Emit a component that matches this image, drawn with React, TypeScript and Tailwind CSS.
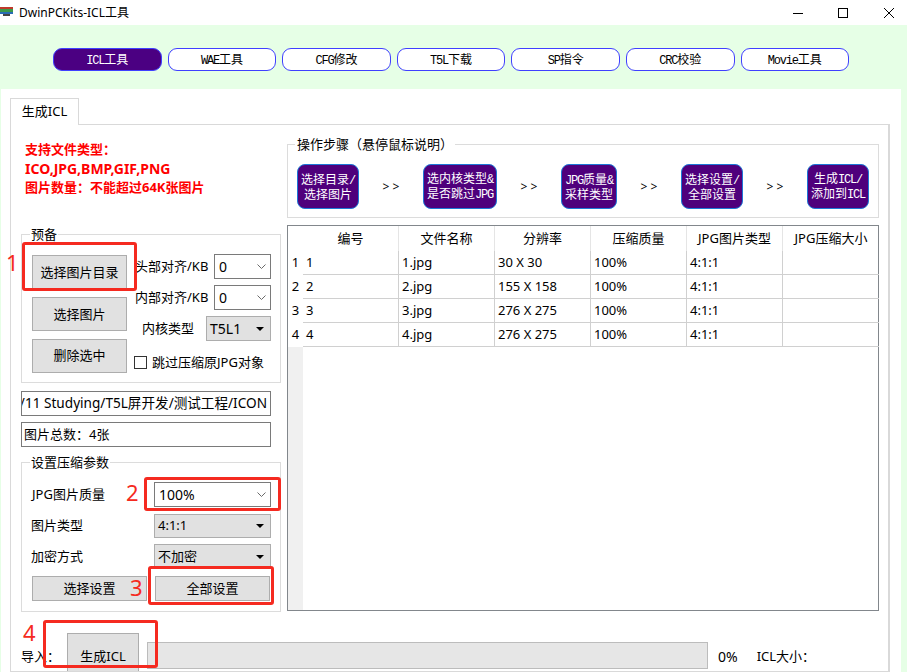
const NAV = ["ICL工具", "WAE工具", "CFG修改", "T5L下载", "SP指令", "CRC校验", "Movie工具"];
const ROWS = [
  ["1", "1.jpg", "30 X 30"],
  ["2", "2.jpg", "155 X 158"],
  ["3", "3.jpg", "276 X 275"],
  ["4", "4.jpg", "276 X 275"],
];
const HEADERS = ["编号", "文件名称", "分辨率", "压缩质量", "JPG图片类型", "JPG压缩大小"];

// latin runs are half width next to the CJK, like the bitmap font in the app
function MixedText({ text }: { text: string }) {
  return (
    <>
      {text.split(/([\x21-\x7e]+)/).map((part, i) =>
        i % 2 === 1 ? (
          <span key={i} className="font-['Liberation_Mono',monospace] tracking-[-1.2px]">{part}</span>
        ) : (
          <span key={i}>{part}</span>
        ),
      )}
    </>
  );
}

function Btn({ label, className }: { label: string; className: string }) {
  return (
    <button className={`flex items-center justify-center border border-[#adadad] bg-[#e1e1e1] text-[13px] text-black ${className}`}>
      {label}
    </button>
  );
}

function Chevron() {
  return (
    <svg width="9" height="5" viewBox="0 0 9 5" fill="none" className="shrink-0">
      <path d="M0.5 0.5 L4.5 4.5 L8.5 0.5" stroke="#6a6a6a" strokeWidth="1" />
    </svg>
  );
}

function Caret() {
  return (
    <svg width="8" height="4" viewBox="0 0 8 4" className="shrink-0">
      <path d="M0 0 H8 L4 4 Z" fill="#000" />
    </svg>
  );
}

function EditCombo({ value, className }: { value: string; className: string }) {
  return (
    <div className={`flex h-[25px] items-center justify-between border border-[#7a7a7a] bg-white pl-[4px] pr-[4px] text-[14px] ${className}`}>
      <span>{value}</span>
      <Chevron />
    </div>
  );
}

function GreyCombo({ value, className }: { value: string; className: string }) {
  return (
    <div className={`flex items-center justify-between border border-[#adadad] bg-[#e1e1e1] pl-[3px] pr-[6px] ${className}`}>
      <span>{value}</span>
      <Caret />
    </div>
  );
}

function Step({ lines, className }: { lines: string[]; className: string }) {
  return (
    <div className={`flex h-[45px] flex-col items-center justify-center rounded-[8px] border border-[#1d78d6] bg-[#4f007c] pt-[1px] text-[12px] leading-[14px] text-white ${className}`}>
      {lines.map((l) => (
        <div key={l} className="whitespace-nowrap">
          <MixedText text={l} />
        </div>
      ))}
    </div>
  );
}

function Arrows() {
  return <span className="mt-[14px] w-[17px] whitespace-pre text-center text-[12px] text-black">{"> >"}</span>;
}

function Mark({ n, className }: { n: string; className: string }) {
  return <span className={`absolute text-[22px] leading-none text-[#f52a20] ${className}`}>{n}</span>;
}

export default function App() {
  return (
    <div className="relative flex h-[672px] w-[907px] flex-col overflow-hidden bg-white font-['Noto_Sans','Noto_Sans_CJK_SC',sans-serif] text-[13px] text-black">
      {/* title bar */}
      <div className="flex h-[25px] shrink-0 items-center">
        <svg width="13" height="9" viewBox="0 0 13 9" className="mb-[2px] shrink-0">
          <rect x="0" y="0" width="13" height="2" fill="#c0392b" />
          <rect x="0" y="2" width="13" height="3" fill="#3c9a4a" />
          <rect x="0" y="5" width="13" height="2" fill="#2a6db5" />
          <rect x="3" y="7" width="7" height="2" fill="#444" />
        </svg>
        <span className="ml-[6px] text-[12px]">DwinPCKits-ICL工具</span>
        <div className="ml-auto flex items-center">
          <svg width="10" height="10" viewBox="0 0 10 10" className="mr-[35px]">
            <path d="M0 5.5 H10" stroke="#000" />
          </svg>
          <svg width="10" height="10" viewBox="0 0 10 10" className="mr-[36px]">
            <rect x="0.5" y="0.5" width="9" height="9" fill="none" stroke="#000" />
          </svg>
          <svg width="10" height="10" viewBox="0 0 10 10" className="mr-[13px]">
            <path d="M0 0 L10 10 M10 0 L0 10" stroke="#000" />
          </svg>
        </div>
      </div>

      <div className="flex min-h-0 flex-1 flex-col bg-[#e6ffe6]">
        {/* nav */}
        <div className="flex h-[64px] shrink-0 gap-[6px] pl-[53px] pt-[23px]">
          {NAV.map((n, i) => (
            <button
              key={n}
              className={`h-[23px] w-[108.6px] rounded-[9px] border border-[#4040ff] pt-[1px] text-[12px] ${i === 0 ? "bg-[#4b0082] text-white" : "bg-white text-black"}`}
            >
              <MixedText text={n} />
            </button>
          ))}
        </div>

        {/* panel */}
        <div className="ml-[1px] mr-[6px] flex min-h-0 flex-1 flex-col bg-white pl-[9px] pr-[11px] pt-[9px]">
          <div className="z-10 -mb-px flex h-[27px] w-[69px] shrink-0 items-center justify-center border border-b-0 border-[#d9d9d9] bg-white text-[13px]">
            生成ICL
          </div>
          <div className="flex min-h-0 flex-1 overflow-hidden border border-r-2 border-[#d9d9d9] pl-[10px]">
            {/* left column */}
            <div className="w-[260px] shrink-0">
              <div className="ml-[4px] mt-[15px] text-[13px] font-bold leading-[19px] text-[#ff0000]">
                <p>支持文件类型：</p>
                <p className="text-[14px]">ICO,JPG,BMP,GIF,PNG</p>
                <p>图片数量：不能超过64K张图片</p>
              </div>

              <div className="relative mt-[37px] h-[149px] border border-[#dcdcdc]">
                <span className="absolute -top-[9px] left-[8px] bg-white px-[1px] leading-[16px]">预备</span>
                <div className="flex pl-[10px] pt-[20px]">
                  <div className="flex w-[95px] flex-col gap-[8px]">
                    <Btn label="选择图片目录" className="h-[34px] pt-[2px]" />
                    <Btn label="选择图片" className="h-[34px] pt-[2px]" />
                    <Btn label="删除选中" className="h-[34px]" />
                  </div>
                  <div className="-mt-px ml-[7px] flex w-[137px] flex-col gap-[6px]">
                    <div className="flex items-center justify-between">
                      <span className="ml-px whitespace-nowrap">头部对齐/KB</span>
                      <EditCombo value="0" className="w-[57px]" />
                    </div>
                    <div className="flex items-center justify-between">
                      <span className="ml-px whitespace-nowrap">内部对齐/KB</span>
                      <EditCombo value="0" className="w-[57px]" />
                    </div>
                    <div className="flex items-center justify-between">
                      <span className="ml-[8px]">内核类型</span>
                      <GreyCombo value="T5L1" className="h-[25px] w-[65px] text-[14px]" />
                    </div>
                    <div className="mt-[6px] flex items-center whitespace-nowrap">
                      <span className="h-[13px] w-[13px] shrink-0 border border-[#333] bg-white" />
                      <span className="ml-[5px]">跳过压缩原JPG对象</span>
                    </div>
                  </div>
                </div>
              </div>

              <div className="mt-[8px] flex h-[25px] w-[250px] items-center justify-end overflow-hidden whitespace-nowrap border border-[#7a7a7a] pr-[3px] text-[13.6px]">
                /11 Studying/T5L屏开发/测试工程/ICON
              </div>
              <div className="mt-[6px] flex h-[25px] w-[250px] items-center border border-[#7a7a7a] pl-[2px]">
                图片总数：4张
              </div>

              <div className="relative mt-[15px] h-[150px] border border-[#dcdcdc] pl-[9px] pr-[9px] pt-[19px]">
                <span className="absolute -top-[9px] left-[8px] bg-white px-[1px] leading-[16px]">设置压缩参数</span>
                <div className="flex items-center justify-between">
                  <span className="ml-px">JPG图片质量</span>
                  <EditCombo value="100%" className="w-[117px]" />
                </div>
                <div className="mt-[7px] flex items-center justify-between">
                  <span>图片类型</span>
                  <GreyCombo value="4:1:1" className="h-[24px] w-[117px] text-[13px]" />
                </div>
                <div className="mt-[6px] flex items-center justify-between">
                  <span>加密方式</span>
                  <GreyCombo value="不加密" className="h-[25px] w-[117px] text-[13px]" />
                </div>
                <div className="ml-[1px] mt-[7px] flex gap-[8px]">
                  <Btn label="选择设置" className="h-[25px] w-[115px]" />
                  <Btn label="全部设置" className="h-[25px] w-[115px]" />
                </div>
              </div>

              <div className="mt-[21px] flex w-[800px] items-start">
                <span className="mt-[14px] w-[46px]">导入：</span>
                <Btn label="生成ICL" className="h-[48px] w-[72px] shrink-0" />
                <div className="ml-[8px] mt-[9px] h-[27px] w-[561px] shrink-0 border border-[#bcbcbc] bg-[#e6e6e6]" />
                <span className="ml-[10px] mt-[13px] text-[14px]">0%</span>
                <span className="ml-[19px] mt-[14px]">ICL大小：</span>
              </div>
            </div>

            {/* right column */}
            <div className="ml-[6px] w-[592px] shrink-0 pt-[19px]">
              <div className="relative flex h-[74px] items-start justify-between border border-[#dcdcdc] px-[9px] pt-[19px]">
                <span className="absolute -top-[9px] left-[7px] bg-white px-[2px] leading-[16px]">操作步骤（悬停鼠标说明）</span>
                <Step lines={["选择目录/", "选择图片"]} className="w-[62px]" />
                <Arrows />
                <Step lines={["选内核类型&", "是否跳过JPG"]} className="w-[74px]" />
                <Arrows />
                <Step lines={["JPG质量&", "采样类型"]} className="w-[56px]" />
                <Arrows />
                <Step lines={["选择设置/", "全部设置"]} className="w-[62px]" />
                <Arrows />
                <Step lines={["生成ICL/", "添加到ICL"]} className="w-[62px]" />
              </div>

              {/* table */}
              <div className="mt-[7px] flex h-[386px] border border-[#82878c]">
                <div className="flex w-[15px] shrink-0 flex-col">
                  <div className="h-[25px] shrink-0" />
                  {ROWS.map((r) => (
                    <div key={r[0]} className="flex h-[24px] shrink-0 items-center justify-center">{r[0]}</div>
                  ))}
                  <div className="flex-1 bg-[#f0f0f0]" />
                </div>
                <div className="min-w-0 flex-1">
                  <div className="flex h-[25px]">
                    {HEADERS.map((h) => (
                      <div key={h} className="flex w-[96px] shrink-0 items-center justify-center whitespace-nowrap border-r border-[#e5e5e5] last:border-r-0">{h}</div>
                    ))}
                  </div>
                  {ROWS.map((r) => (
                    <div key={r[0]} className="flex h-[24px]">
                      {[...r, "100%", "4:1:1", ""].map((c, i) => (
                        <div key={i} className="flex w-[96px] shrink-0 items-center whitespace-nowrap border-b border-r border-[#d0d0d0] pl-[3px] last:border-r-0">{c}</div>
                      ))}
                    </div>
                  ))}
                </div>
              </div>
            </div>
          </div>
        </div>
      </div>

      {/* red annotations over the screenshot */}
      <div className="absolute left-[22px] top-[242px] h-[49px] w-[115px] rounded-[3px] border-[3px] border-[#f52a20]" />
      <div className="absolute left-[144px] top-[477px] h-[34px] w-[137px] rounded-[3px] border-[3px] border-[#f52a20]" />
      <div className="absolute left-[148px] top-[566px] h-[39px] w-[126px] rounded-[3px] border-[3px] border-[#f52a20]" />
      <div className="absolute left-[43px] top-[620px] h-[48px] w-[115px] rounded-[3px] border-[3px] border-[#f52a20]" />
      <Mark n="1" className="left-[6px] top-[251px]" />
      <Mark n="2" className="left-[126px] top-[481px]" />
      <Mark n="3" className="left-[130px] top-[576px]" />
      <Mark n="4" className="left-[23px] top-[621px]" />
    </div>
  );
}
